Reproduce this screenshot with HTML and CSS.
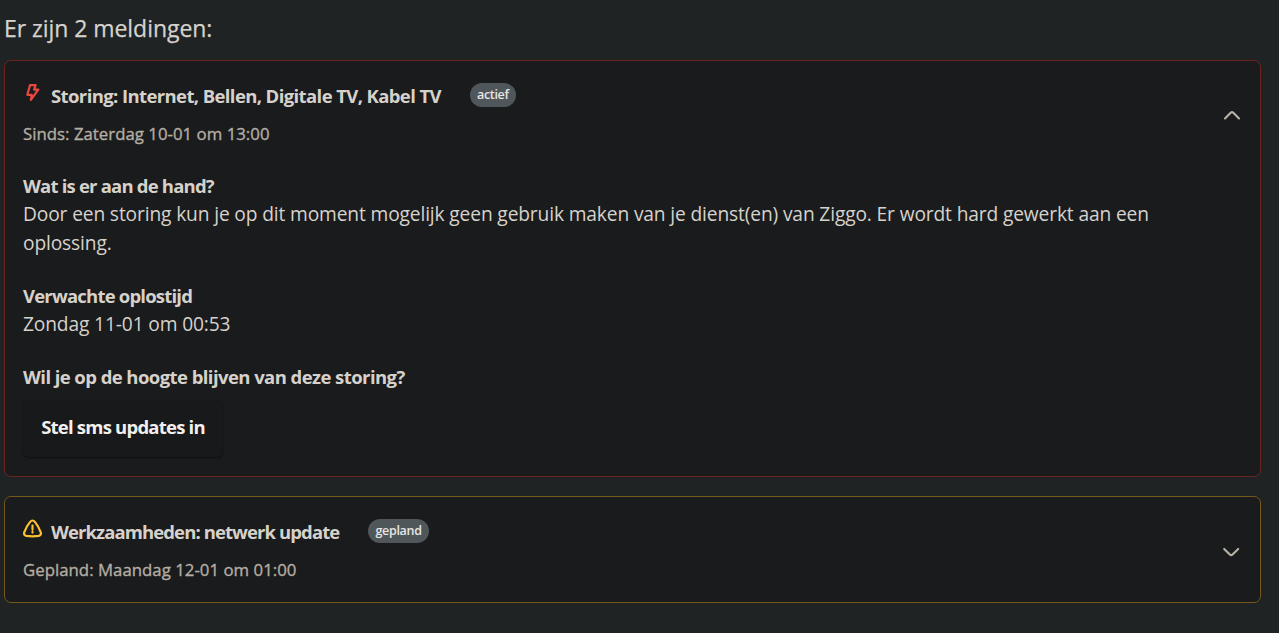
FILE: index.html
```html
<!DOCTYPE html>
<html lang="nl">
<head>
    <meta charset="UTF-8">
    <meta name="viewport" content="width=device-width, initial-scale=1.0">
    <title>Storingen en werkzaamheden</title>
    <link rel="stylesheet" href="styles.css">
</head>
<body>
    <main class="notifications">
        <h1>Er zijn 2 meldingen:</h1>

        <!-- Storing -->
        <section class="card card-error">
            <div class="card-header">
                <div class="card-summary">
                    <div class="title-row">
                        <svg class="icon icon-bolt" viewBox="0 0 20 20">
                            <path d="M7 2.2h5.6l-1.5 4.5h4.2L7.9 16.8l.8-5H4.3z"/>
                        </svg>
                        <h2 class="title-error">Storing: Internet, Bellen, Digitale TV, Kabel TV</h2>
                        <span class="badge">actief</span>
                    </div>
                    <p class="date">Sinds: Zaterdag 10-01 om 13:00</p>
                </div>
                <svg class="chevron chevron-up" viewBox="0 0 20 20">
                    <path d="M3 13.4l5.9-5.8q1.1-1 2.2 0l5.9 5.8"/>
                </svg>
            </div>
            <div class="card-body">
                <div class="block">
                    <h3>Wat is er aan de hand?</h3>
                    <p>Door een storing kun je op dit moment mogelijk geen gebruik maken van je dienst(en) van Ziggo. Er wordt hard gewerkt aan een oplossing.</p>
                </div>
                <div class="block">
                    <h3>Verwachte oplostijd</h3>
                    <p>Zondag 11-01 om 00:53</p>
                </div>
                <div class="block">
                    <h3 class="heading-updates">Wil je op de hoogte blijven van deze storing?</h3>
                    <button type="button">Stel sms updates in</button>
                </div>
            </div>
        </section>

        <!-- Werkzaamheden -->
        <section class="card card-warning">
            <div class="card-header">
                <div class="card-summary">
                    <div class="title-row">
                        <svg class="icon icon-warning" viewBox="0 0 20 20">
                            <path d="M7.1 2.9Q9.5 .1 11.9 2.9Q15.8 7.7 17.8 13.4Q18.5 16.2 15.7 16.9Q9.5 17.7 3.3 16.9Q.5 16.2 1.2 13.4Q3.2 7.7 7.1 2.9z"/>
                            <path d="M9.5 6.6v4.1M9.5 12.9v.7"/>
                        </svg>
                        <h2 class="title-warning">Werkzaamheden: netwerk update</h2>
                        <span class="badge">gepland</span>
                    </div>
                    <p class="date">Gepland: Maandag 12-01 om 01:00</p>
                </div>
                <svg class="chevron" viewBox="0 0 20 20">
                    <path d="M2.2 6.9l5.9 5.8q1.1 1 2.2 0l5.9-5.8"/>
                </svg>
            </div>
        </section>
    </main>
</body>
</html>
```
FILE: styles.css
```css
* {
    margin: 0;
    padding: 0;
    box-sizing: border-box;
}

body {
    background-color: #1f2324;
    color: #d6d2cb;
    font-family: "Open Sans", "Noto Sans", sans-serif;
    font-size: 19.2px;
    line-height: 28.8px;
    letter-spacing: -0.14px;
}

.notifications {
    padding: 10px 18px 0 4px;
}

h1 {
    font-size: 23px;
    font-weight: 400;
    line-height: 36px;
    margin-bottom: 14px;
    letter-spacing: -0.05px;
    -webkit-text-stroke: 0.25px;
}

.card {
    background-color: #1a1b1c;
    border: 1px solid;
    border-radius: 7px;
    padding: 17px 18px;
    margin-bottom: 19px;
}

.card-error {
    border-color: #6b2420;
    height: 417px;
}

.card-warning {
    border-color: #76591a;
    height: 107px;
}

.card-header {
    display: flex;
    align-items: center;
    justify-content: space-between;
    height: 72px;
}

.card-summary {
    height: 72px;
}

.title-row {
    display: flex;
    align-items: center;
    height: 34px;
}

.icon {
    width: 20px;
    height: 20px;
    margin-right: 8px;
    margin-bottom: 5px;
    fill: none;
    stroke-width: 2.2;
    stroke-linejoin: round;
    stroke-linecap: round;
}

.icon-bolt {
    stroke: #e8483f;
}

.icon-warning {
    stroke: #fdc02f;
}

h2,
h3 {
    font-size: 18.5px;
    font-weight: 700;
    line-height: 29px;
    letter-spacing: -0.8px;
}

.title-error {
    letter-spacing: -0.61px;
}

.title-warning {
    letter-spacing: -0.9px;
}

.heading-updates {
    letter-spacing: -0.57px;
}

.badge {
    background-color: #50575b;
    color: #e8e6e3;
    border-radius: 12px;
    font-size: 12.5px;
    font-weight: 600;
    line-height: 24px;
    letter-spacing: -0.3px;
    padding: 0 7px;
    margin-left: 29px;
}

.date {
    color: #b3ada3;
    font-size: 16.8px;
    font-weight: 500;
    line-height: 26px;
    letter-spacing: 0.02px;
    margin-top: 9px;
    -webkit-text-stroke: 0.35px;
}

.chevron {
    width: 20px;
    height: 20px;
    margin-top: 3px;
    fill: none;
    stroke: #b8b2a8;
    stroke-width: 2.1;
    stroke-linecap: round;
}

.chevron-up {
    margin-top: 1px;
}

.card-body {
    padding: 21.4px 60px 0 0;
}

.block {
    margin-bottom: 23px;
}

button {
    display: block;
    background-color: #18191a;
    color: #f1f0ee;
    border: none;
    border-radius: 6px;
    box-shadow: 0 1px 2px rgba(0, 0, 0, 0.5);
    font-family: inherit;
    font-size: 18.5px;
    font-weight: 700;
    letter-spacing: -0.78px;
    width: 200px;
    height: 57px;
    padding-bottom: 4px;
    margin-top: 9px;
    cursor: pointer;
}
```
